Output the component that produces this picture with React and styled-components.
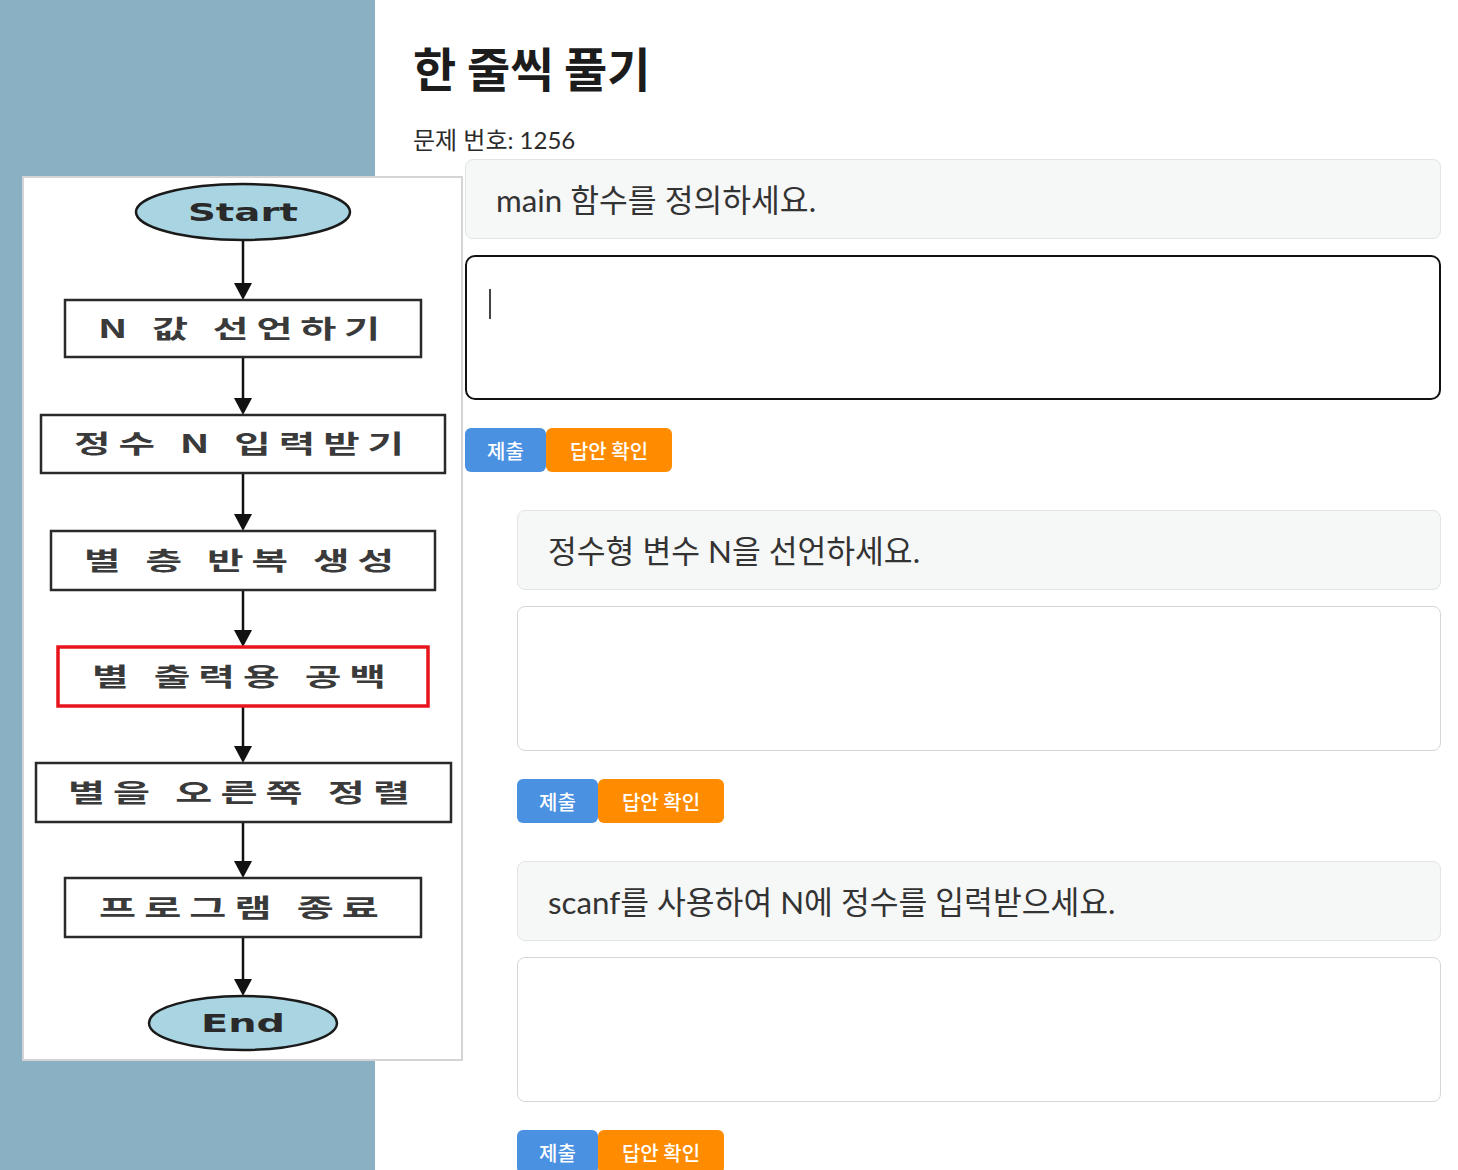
import React from 'react';
import styled, { createGlobalStyle } from 'styled-components';

const GlobalStyle = createGlobalStyle`
  body {
    margin: 0;
    background: #ffffff;
    font-family: Lato, "Noto Sans CJK KR", sans-serif;
  }
`;

const Page = styled.div`
  position: relative;
  display: flex;
  min-height: 100vh;
`;

const Sidebar = styled.aside`
  flex: 0 0 375px;
  background: #89b1c3;
`;

const Main = styled.main`
  flex: 1;
  padding: 39px 17px 0 38px;
  color: #222;
`;

const Title = styled.h1`
  margin: 0;
  font-family: "Noto Sans CJK KR", sans-serif;
  font-size: 47px;
  font-weight: 700;
  line-height: 56px;
  color: #1c1c1c;
`;

const ProblemNo = styled.p`
  margin: 28px 0 3px;
  font-size: 24px;
  line-height: 33px;
  color: #2a2a2a;
`;

const Step = styled.section`
  margin-left: ${props => props.indent}px;
  padding-bottom: 38px;
`;

const Prompt = styled.div`
  box-sizing: border-box;
  height: 80px;
  display: flex;
  align-items: center;
  padding: 0 30px 2px;
  background: #f6f7f7;
  border: 1px solid #e2e4e5;
  border-radius: 8px;
  font-size: 31.3px;
  color: #333;
`;

const Answer = styled.div`
  box-sizing: border-box;
  height: 145px;
  margin-top: 16px;
  padding: 32px 22px;
  background: #fff;
  border: ${props => (props.focused ? '2.5px solid #111' : '1.5px solid #d6d6d6')};
  border-radius: ${props => (props.focused ? '10px' : '8px')};
`;

const Caret = styled.span`
  display: block;
  width: 2px;
  height: 30px;
  background: #444;
`;

const Actions = styled.div`
  display: flex;
  margin-top: 28px;
`;

const Button = styled.button`
  height: 44px;
  width: ${props => props.w}px;
  border: none;
  border-radius: 6px;
  background: ${props => props.bg};
  color: #fff;
  font-family: "Noto Sans CJK KR", sans-serif;
  font-size: 20px;
  font-weight: 500;
  padding: 0;
  cursor: pointer;
`;

const Flowchart = styled.figure`
  position: absolute;
  left: 22px;
  top: 176px;
  margin: 0;
  box-sizing: border-box;
  width: 441px;
  height: 885px;
  background: #fff;
  border: 2px solid #d2d4d6;
`;

const nodes = [
  { label: 'N 값 선언하기', x: 43, y: 124, w: 356, h: 57, tw: 290 },
  { label: '정수 N 입력받기', x: 19, y: 239, w: 404, h: 58, tw: 338 },
  { label: '별 층 반복 생성', x: 29, y: 355, w: 384, h: 59, tw: 318 },
  { label: '별 출력용 공백', x: 36, y: 471, w: 370, h: 59, tw: 302, hot: true },
  { label: '별을 오른쪽 정렬', x: 14, y: 587, w: 415, h: 59, tw: 350 },
  { label: '프로그램 종료', x: 43, y: 702, w: 356, h: 59, tw: 288 },
];

const arrows = [
  [64, 124],
  [181, 239],
  [297, 355],
  [414, 471],
  [530, 587],
  [646, 702],
  [761, 820],
];

const Chart = () => (
  <svg width="437" height="881" viewBox="2 2 437 881">
    {arrows.map(([from, to]) => (
      <g key={from}>
        <line x1="221" y1={from} x2="221" y2={to - 14} stroke="#111" strokeWidth="2.5" />
        <polygon points={`212,${to - 17} 230,${to - 17} 221,${to}`} fill="#111" />
      </g>
    ))}
    <ellipse cx="221" cy="36" rx="107" ry="28" fill="#a9d5e3" stroke="#1a1a1a" strokeWidth="2.5" />
    <text x="221" y="45" textAnchor="middle" textLength="110" lengthAdjust="spacingAndGlyphs"
      fontFamily="'DejaVu Sans', sans-serif" fontWeight="700" fontSize="25" fill="#2a2a2a">Start</text>
    {nodes.map(n => (
      <g key={n.label}>
        <rect x={n.x} y={n.y} width={n.w} height={n.h} fill="#fff"
          stroke={n.hot ? '#e8141c' : '#2a2a2a'} strokeWidth={n.hot ? 3.5 : 2.5} />
        <text x="221" y={n.y + n.h / 2 + 9} textAnchor="middle" textLength={n.tw} lengthAdjust="spacingAndGlyphs"
          letterSpacing="5" fontFamily="'Noto Sans CJK KR', sans-serif" fontWeight="600" fontSize="25"
          fill="#3a3a3a">{n.label}</text>
      </g>
    ))}
    <ellipse cx="221" cy="847" rx="94" ry="27" fill="#a9d5e3" stroke="#1a1a1a" strokeWidth="2.5" />
    <text x="221" y="856" textAnchor="middle" textLength="84" lengthAdjust="spacingAndGlyphs"
      fontFamily="'DejaVu Sans', sans-serif" fontWeight="700" fontSize="25" fill="#2a2a2a">End</text>
  </svg>
);

const steps = [
  { text: 'main 함수를 정의하세요.', indent: 52, focused: true },
  { text: '정수형 변수 N을 선언하세요.', indent: 104 },
  { text: 'scanf를 사용하여 N에 정수를 입력받으세요.', indent: 104 },
];

export default function App() {
  return (
    <Page>
      <GlobalStyle />
      <Sidebar />
      <Main>
        <Title>한 줄씩 풀기</Title>
        <ProblemNo>문제 번호: 1256</ProblemNo>
        {steps.map(s => (
          <Step key={s.text} indent={s.indent}>
            <Prompt>{s.text}</Prompt>
            <Answer focused={s.focused}>{s.focused && <Caret />}</Answer>
            <Actions>
              <Button w={81} bg="#4a91e2">제출</Button>
              <Button w={126} bg="#ff8c00">답안 확인</Button>
            </Actions>
          </Step>
        ))}
      </Main>
      <Flowchart>
        <Chart />
      </Flowchart>
    </Page>
  );
}
